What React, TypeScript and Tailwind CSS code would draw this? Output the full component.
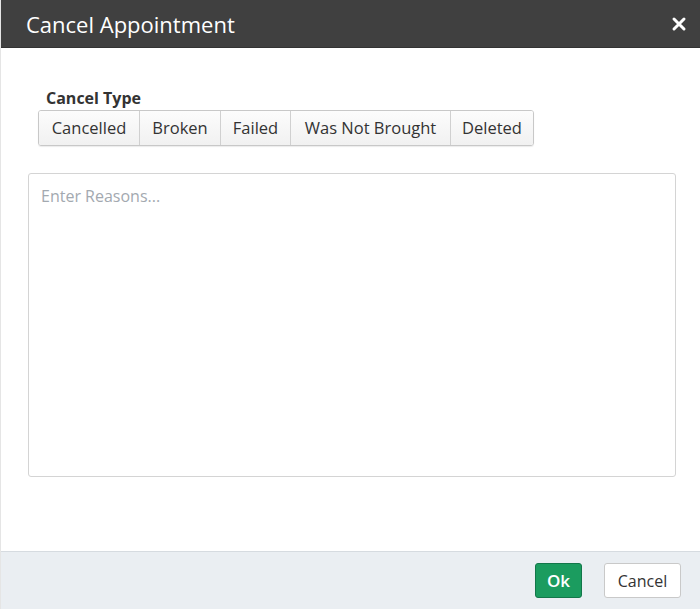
import { useState } from 'react';

const types = [
  { label: 'Cancelled', w: 'w-[100px]' },
  { label: 'Broken', w: 'w-[81px]' },
  { label: 'Failed', w: 'w-[70px]' },
  { label: 'Was Not Brought', w: 'w-[160px]' },
  { label: 'Deleted', w: 'w-[83px]' },
];

export default function App() {
  const [reason, setReason] = useState('');
  const [selected, setSelected] = useState<string | null>(null);

  return (
    <div
      className="w-[700px] h-[609px] flex flex-col bg-white border-l border-[#e5e5e5] overflow-hidden"
      style={{ fontFamily: '"Open Sans", "Noto Sans", sans-serif' }}
    >
      {/* Header */}
      <div className="h-[48px] shrink-0 bg-[#404040] border-b border-[#333] flex items-center justify-between pl-[25px] pr-[13px]">
        <h1 className="text-white text-[22px] leading-none">Cancel Appointment</h1>
        <button className="text-white">
          <svg width="16" height="16" viewBox="0 0 16 16">
            <path d="M3 3 L13 13 M13 3 L3 13" stroke="white" strokeWidth="3" strokeLinecap="round" />
          </svg>
        </button>
      </div>

      {/* Body */}
      <div className="flex-1 flex flex-col pl-[27px] pr-[24px] pt-[40px]">
        <div className="pl-[10px]">
          <div className="pl-[8px] text-[16px] font-bold text-[#333] leading-[20px]">Cancel Type</div>
          <div className="mt-[2px] inline-flex border border-[#c8c8c8] rounded-[3px] shadow-[0_1px_1px_rgba(0,0,0,0.08)] overflow-hidden">
            {types.map((t, i) => (
              <button
                key={t.label}
                onClick={() => setSelected(t.label)}
                className={`${t.w} h-[34px] text-[16.5px] text-[#333] bg-gradient-to-b from-[#fcfcfc] to-[#f1f1f1] ${
                  i > 0 ? 'border-l border-[#d0d0d0]' : ''
                } ${selected === t.label ? 'from-[#e2e2e2] to-[#ececec]' : ''}`}
              >
                {t.label}
              </button>
            ))}
          </div>
        </div>

        <textarea
          value={reason}
          onChange={(e) => setReason(e.target.value)}
          placeholder="Enter Reasons..."
          className="mt-[27px] h-[304px] w-full resize-none border border-[#d4d4d4] rounded-[3px] px-[12px] py-[10px] text-[16px] text-[#333] placeholder:text-[#a3a9b0] outline-none"
        />
      </div>

      {/* Footer */}
      <div className="h-[58px] shrink-0 bg-[#eaeef2] border-t border-[#d6dbe0] flex items-center justify-end gap-[22px] pr-[19px]">
        <button className="h-[35px] w-[47px] rounded-[3px] bg-[#1b9c5f] border border-[#13774a] text-white text-[17px] font-semibold">
          Ok
        </button>
        <button className="h-[35px] w-[77px] rounded-[3px] bg-white border border-[#c9c9c9] text-[#333] text-[16px]">
          Cancel
        </button>
      </div>
    </div>
  );
}
